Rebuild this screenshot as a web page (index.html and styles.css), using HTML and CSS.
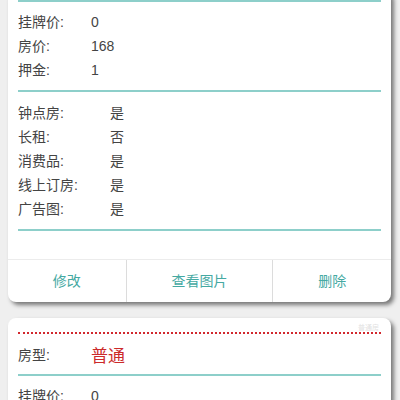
FILE: index.html
```html
<!DOCTYPE html>
<html lang="zh-CN">
<head>
<meta charset="utf-8">
<link rel="stylesheet" href="styles.css">
</head>
<body>
<div class="list">
  <div class="card card-cut">
    <div class="rule"></div>
    <div class="section">
      <div class="row"><span class="label">挂牌价:</span><span class="value">0</span></div>
      <div class="row"><span class="label">房价:</span><span class="value">168</span></div>
      <div class="row"><span class="label">押金:</span><span class="value">1</span></div>
    </div>
    <div class="rule"></div>
    <div class="section section-b">
      <div class="row"><span class="label">钟点房:</span><span class="value">是</span></div>
      <div class="row"><span class="label">长租:</span><span class="value">否</span></div>
      <div class="row"><span class="label">消费品:</span><span class="value">是</span></div>
      <div class="row"><span class="label">线上订房:</span><span class="value">是</span></div>
      <div class="row"><span class="label">广告图:</span><span class="value">是</span></div>
    </div>
    <div class="rule"></div>
    <div class="spacer"></div>
    <div class="actions">
      <div class="btn">修改</div>
      <div class="btn">查看图片</div>
      <div class="btn">删除</div>
    </div>
  </div>
  <div class="card">
    <div class="card-head"><span class="tag">普通房</span></div>
    <div class="dotted"></div>
    <div class="type-row"><span class="label">房型:</span><span class="type">普通</span></div>
    <div class="rule"></div>
    <div class="section">
      <div class="row"><span class="label">挂牌价:</span><span class="value">0</span></div>
    </div>
  </div>
</div>
</body>
</html>
```
FILE: styles.css
```css
html, body {
  margin: 0;
  padding: 0;
}
body {
  background: #efefef;
  font-family: "Liberation Sans", "Noto Sans CJK SC", sans-serif;
  font-size: 14px;
  color: #444;
  overflow: hidden;
}
.list {
  display: flex;
  flex-direction: column;
  gap: 16px;
  margin-top: -10px;
  padding: 0 9px 0 8px;
}
.card {
  background: #fff;
  border-radius: 8px;
  box-shadow: 3px 3px 4px rgba(0, 0, 0, 0.5);
}
.card-cut {
  padding-top: 10px;
}
.card-head {
  height: 14px;
  line-height: 14px;
  text-align: right;
  padding-right: 12px;
}
.tag {
  font-size: 7px;
  color: #e2e2e2;
}
.dotted {
  margin: 0 10px;
  border-top: 2px dotted #d2282e;
}
.type-row {
  display: flex;
  align-items: center;
  height: 40px;
  padding: 0 10px;
}
.label {
  width: 73px;
  flex: none;
}
.type {
  color: #cc2a2a;
  font-size: 17px;
}
.rule {
  margin: 0 10px;
  height: 2px;
  background: #8dcfca;
}
.section {
  padding: 8px 10px;
}
.section-b {
  padding-top: 9px;
}
.section-b .label {
  width: 92px;
}
.row {
  display: flex;
  height: 24px;
  line-height: 24px;
}
.spacer {
  height: 28px;
}
.actions {
  display: flex;
  border-top: 1px solid #ececec;
}
.btn {
  flex: auto;
  text-align: center;
  line-height: 42px;
  color: #45a9a2;
  border-left: 1px solid #dcdcdc;
}
.btn:first-child {
  border-left: none;
}
```
